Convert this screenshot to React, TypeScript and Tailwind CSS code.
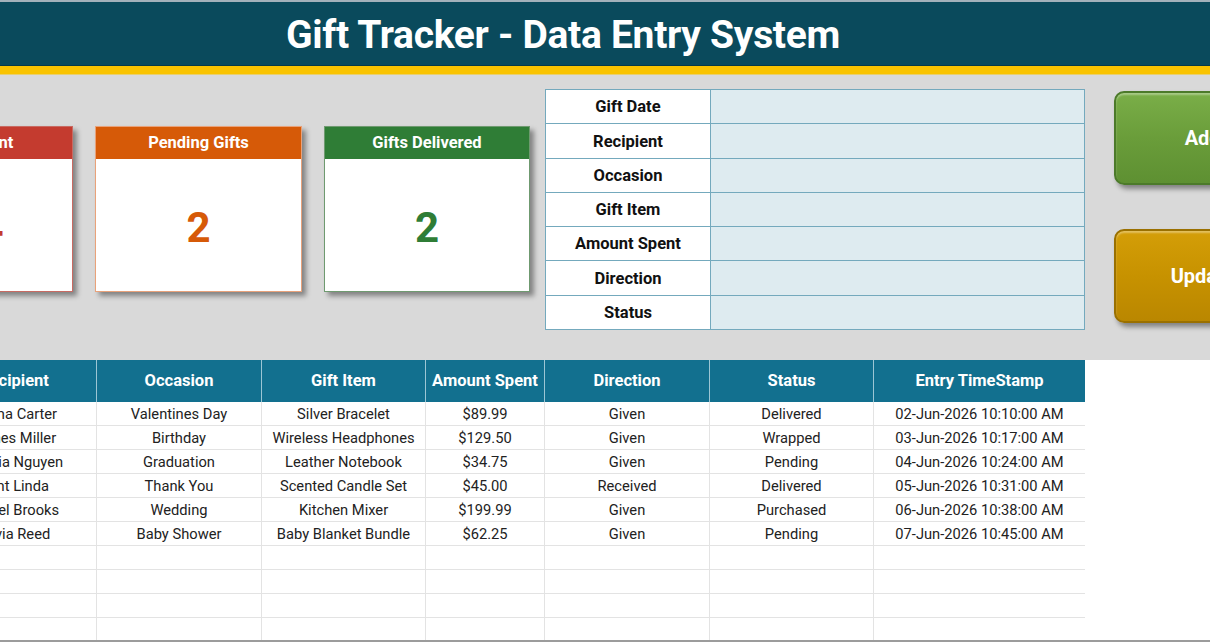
import React from "react";

const cols = [
  { key: "recipient", label: "Recipient", w: "w-[165px]" },
  { key: "occasion", label: "Occasion", w: "w-[165px]" },
  { key: "item", label: "Gift Item", w: "w-[164px]" },
  { key: "amount", label: "Amount Spent", w: "w-[119px]" },
  { key: "direction", label: "Direction", w: "w-[165px]" },
  { key: "status", label: "Status", w: "w-[164px]" },
  { key: "ts", label: "Entry TimeStamp", w: "w-[211px]" },
];

const rows = [
  ["Emma Carter", "Valentines Day", "Silver Bracelet", "$89.99", "Given", "Delivered", "02-Jun-2026 10:10:00 AM"],
  ["James Miller", "Birthday", "Wireless Headphones", "$129.50", "Given", "Wrapped", "03-Jun-2026 10:17:00 AM"],
  ["Sophia Nguyen", "Graduation", "Leather Notebook", "$34.75", "Given", "Pending", "04-Jun-2026 10:24:00 AM"],
  ["Aunt Linda", "Thank You", "Scented Candle Set", "$45.00", "Received", "Delivered", "05-Jun-2026 10:31:00 AM"],
  ["Daniel Brooks", "Wedding", "Kitchen Mixer", "$199.99", "Given", "Purchased", "06-Jun-2026 10:38:00 AM"],
  ["Olivia Reed", "Baby Shower", "Baby Blanket Bundle", "$62.25", "Given", "Pending", "07-Jun-2026 10:45:00 AM"],
  ["", "", "", "", "", "", ""],
  ["", "", "", "", "", "", ""],
  ["", "", "", "", "", "", ""],
  ["", "", "", "", "", "", ""],
];

const formLabels = ["Gift Date", "Recipient", "Occasion", "Gift Item", "Amount Spent", "Direction", "Status"];

export default function App() {
  return (
    <div className="w-[1210px] h-[642px] overflow-hidden bg-white font-['Roboto','Liberation_Sans',sans-serif] text-[#1f1f1f]">
      {/* Header */}
      <div className="h-[2px] bg-[#a3b1ba]" />
      <div className="h-[64px] bg-[#0a4a5c] border-b border-[#073a48] flex items-center justify-center pr-[84px] pt-[3px]">
        <h1 className="text-white font-bold text-[39px] tracking-[-0.3px] leading-none">
          Gift Tracker - Data Entry System
        </h1>
      </div>
      <div className="h-[9px] bg-[#f9c300] border-b border-[#e8cf70]" />

      {/* Grey panel */}
      <div className="h-[285px] bg-[#d9d9d9] flex items-start">
        {/* KPI cards */}
        <div className="flex shrink-0 gap-[22px] mt-[51px] ml-[-134px]">
          <div className="w-[207px] h-[166px] shrink-0 flex flex-col bg-white border border-[#c86a62] shadow-[4px_4px_5px_rgba(0,0,0,0.4)]">
            <div className="h-[32px] bg-[#c43b2f] flex items-center justify-center text-white font-bold text-[16.5px] pl-[14px]">
              Gifts Sent
            </div>
            <div className="flex-1 flex items-center justify-center pl-[44px] pt-[4px] text-[#c43b2f] font-bold text-[42px]">
              4
            </div>
          </div>
          <div className="w-[207px] h-[166px] shrink-0 flex flex-col bg-white border border-[#e9a27a] shadow-[4px_4px_5px_rgba(0,0,0,0.4)]">
            <div className="h-[32px] bg-[#d65a08] flex items-center justify-center text-white font-bold text-[16.5px]">
              Pending Gifts
            </div>
            <div className="flex-1 flex items-center justify-center pt-[4px] text-[#d65a08] font-bold text-[42px]">
              2
            </div>
          </div>
          <div className="w-[206px] h-[166px] shrink-0 flex flex-col bg-white border border-[#6f9a70] shadow-[4px_4px_5px_rgba(0,0,0,0.4)]">
            <div className="h-[32px] bg-[#2f7d36] flex items-center justify-center text-white font-bold text-[16.5px]">
              Gifts Delivered
            </div>
            <div className="flex-1 flex items-center justify-center pt-[4px] text-[#2f7d36] font-bold text-[42px]">
              2
            </div>
          </div>
        </div>

        {/* Form */}
        <div className="ml-[15px] mt-[14px] w-[540px] shrink-0 h-[241px] bg-[#74a9bd] p-px grid grid-cols-[164px_1fr] grid-rows-7 gap-px">
          {formLabels.map((l) => (
            <React.Fragment key={l}>
              <div className="bg-white flex items-center justify-center pt-[2px] font-bold text-[16.5px] text-[#111]">
                {l}
              </div>
              <div className="bg-[#deebf0]" />
            </React.Fragment>
          ))}
        </div>

        {/* Buttons */}
        <div className="ml-[29px] mt-[16px] flex flex-col gap-[44px] shrink-0">
          <div className="w-[246px] h-[94px] rounded-[10px] border-2 border-[#4c7a2a] bg-gradient-to-b from-[#7aae48] via-[#6a9d3a] to-[#5e9032] shadow-[3px_4px_5px_rgba(0,0,0,0.4),inset_0_2px_2px_rgba(255,255,255,0.35)] flex items-center justify-center text-white font-bold text-[20px]">
            Add Record
          </div>
          <div className="w-[246px] h-[94px] rounded-[10px] border-2 border-[#9a7000] bg-gradient-to-b from-[#d49e08] via-[#c79200] to-[#ba8700] shadow-[3px_4px_5px_rgba(0,0,0,0.4),inset_0_2px_2px_rgba(255,255,255,0.35)] flex items-center justify-center text-white font-bold text-[20px]">
            Update Record
          </div>
        </div>
      </div>

      {/* Data table */}
      <div className="h-[282px] border-b-2 border-[#9c9c9c] overflow-hidden">
        <div className="ml-[-68px] w-[1153px]">
          <div className="flex h-[42px] bg-[#12708f]">
            {cols.map((c, i) => (
              <div
                key={c.key}
                className={`${c.w} shrink-0 flex items-center justify-center text-white font-bold text-[16.5px] ${i < cols.length - 1 ? "border-r border-[#9cc6d4]" : ""}`}
              >
                {c.label}
              </div>
            ))}
          </div>
          {rows.map((r, ri) => (
            <div key={ri} className="flex h-[24px] border-b border-[#e3e3e3]">
              {r.map((v, ci) => (
                <div
                  key={ci}
                  className={`${cols[ci].w} shrink-0 flex items-center justify-center pt-[1px] text-[14.7px] text-[#222] ${ci < cols.length - 1 ? "border-r border-[#e3e3e3]" : ""}`}
                >
                  {v}
                </div>
              ))}
            </div>
          ))}
        </div>
      </div>
    </div>
  );
}
